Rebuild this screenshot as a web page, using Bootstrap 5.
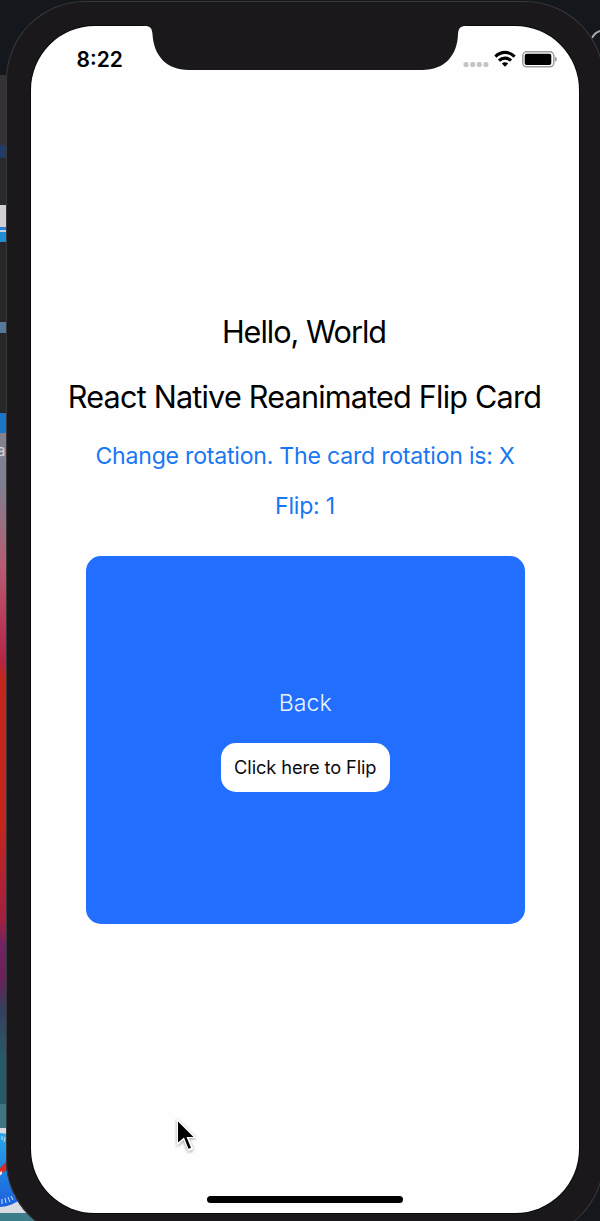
<!DOCTYPE html>
<html lang="en">
<head>
<meta charset="utf-8">
<meta name="viewport" content="width=device-width, initial-scale=1">
<title>Flip Card</title>
<link href="https://cdn.jsdelivr.net/npm/bootstrap@5.3.0/dist/css/bootstrap.min.css" rel="stylesheet">
<style>
  body { width: 600px; height: 1221px; background: #14171c; font-family: Inter, "Liberation Sans", sans-serif; color: #000; }
  .desktop-art { left: 0; top: 0; }
  .phone { width: 598px; height: 1238px; margin: 1px 0 0 6px; padding: 25px; border-radius: 79px; background: #1a181b; box-shadow: inset 0 0 0 1px #38383b; }
  .phone-screen { width: 548px; height: 1187px; border-radius: 64px; background: #fffeff; box-shadow: 0 0 0 1px #08080a; }
  .notch { left: 112px; top: -1px; }
  .status { height: 67px; padding: 0 23px 0 45.5px; }
  .clock { font-size: 21px; font-weight: 600; line-height: 26px; }
  .info { padding-top: 219px; }
  .heading-line { font-size: 30.6px; line-height: 40px; margin-bottom: 25px; white-space: nowrap; letter-spacing: -.8px; }
  .heading-line.greeting { letter-spacing: -1px; margin-left: -2px; }
  .heading-line.subject { margin-bottom: 23.5px; margin-left: -1px; }
  .link-btn { font-size: 23.1px; line-height: 30px; color: #1877f2; white-space: nowrap; letter-spacing: -.23px; }
  .flip-card { width: 438.5px; height: 368.5px; margin: 35px 0 0 55px; padding-top: 132.5px; border-radius: 15px; background: #226eff; }
  .back-label { font-size: 23.1px; line-height: 30px; color: #e9f4ff; font-weight: 300; }
  .flip-btn, .flip-btn:hover { width: 169px; height: 49px; margin-top: 25px; border-radius: 15px; background: #fffeff; color: #0b0b0d; font-size: 18.3px; line-height: 49px; letter-spacing: -.12px; white-space: nowrap; }
  .home-bar { width: 196px; height: 6.5px; background: #000; margin: 0 0 10.5px 176px; }
  .pointer { left: 170px; top: 1112px; filter: drop-shadow(0 1px 1.5px rgba(0,0,0,.4)); }
</style>
</head>
<body class="position-relative overflow-hidden m-0">
<svg class="desktop-art position-absolute" width="600" height="1221" viewBox="0 0 600 1221" aria-hidden="true">
  <defs>
    <linearGradient id="wall" gradientUnits="userSpaceOnUse" x1="0" y1="433" x2="0" y2="1221">
      <stop offset="0" stop-color="#85828f"/><stop offset=".06" stop-color="#7c8091"/>
      <stop offset=".17" stop-color="#b85b72"/><stop offset=".25" stop-color="#ba3557"/>
      <stop offset=".29" stop-color="#b42543"/><stop offset=".31" stop-color="#c2261b"/>
      <stop offset=".5" stop-color="#c3251e"/><stop offset=".62" stop-color="#a11f42"/>
      <stop offset=".65" stop-color="#6f2464"/><stop offset=".69" stop-color="#6c2059"/>
      <stop offset=".73" stop-color="#363e5e"/><stop offset=".79" stop-color="#28596a"/>
      <stop offset="1" stop-color="#28596a"/>
    </linearGradient>
    <linearGradient id="dial" x1="0" y1="0" x2="0" y2="1">
      <stop offset="0" stop-color="#26a8ea"/><stop offset="1" stop-color="#1d5fdc"/>
    </linearGradient>
  </defs>
  <rect y="75" width="8" height="70" fill="#343235"/>
  <rect y="145" width="8" height="13" fill="#203c66"/>
  <rect y="158" width="8" height="47" fill="#29292b"/>
  <rect y="205" width="8" height="22" fill="#d2d0d3"/>
  <rect y="227" width="8" height="3" fill="#2880d8"/>
  <rect y="230" width="8" height="2" fill="#c4d4e4"/>
  <rect y="232" width="8" height="10" fill="#218dd4"/>
  <rect y="242" width="8" height="80" fill="#272728"/>
  <rect y="322" width="8" height="11" fill="#56789a"/>
  <rect y="333" width="8" height="80" fill="#272728"/>
  <rect y="413" width="8" height="20" fill="#1c76c8"/>
  <rect y="433" width="60" height="788" fill="url(#wall)"/>
  <text x="-3" y="456" font-size="15" font-family="Inter, sans-serif" fill="#d8d5da">a</text>
  <rect y="1104" width="60" height="24" fill="#3f7684"/>
  <rect y="1128" width="60" height="85" fill="#d9dce1"/>
  <circle cx="-2" cy="1170" r="37" fill="url(#dial)"/>
  <path d="M-2 1170 7 1161V1170L-2 1175Z" fill="#d62d29"/>
  <path d="M-2 1173 2 1171V1174L-2 1177Z" fill="#f1e8e8"/>
  <path d="M2 1136v4M5 1137l-1 5M2 1199v5M5 1198l1 5M8 1197l2 5M11 1196l2 4M14 1194l2 4" stroke="#c5e4fb" stroke-width="1"/>
  <rect y="1213" width="60" height="8" fill="#3d7e8b"/>
  <path d="M592 38 C594 34 597 32 600 31" fill="none" stroke="#aaa9ac" stroke-width="2"/>
</svg>

<main class="phone position-relative">
  <div class="phone-screen position-relative d-flex flex-column">
    <svg class="notch position-absolute" width="326" height="46" viewBox="143 25 326 46" aria-hidden="true">
      <path d="M143 25V26H145C150 26 152 28 152.5 34C153.5 55 166 70 189 70H422C445 70 457.5 55 458 34C458.5 28 460.5 26 466 26H468V25Z" fill="#1a181b"/>
    </svg>
    <header class="status d-flex justify-content-between align-items-center">
      <span class="clock">8:22</span>
      <svg width="94" height="24" viewBox="462 48 94 24" overflow="visible" aria-label="Signal, Wi-Fi, battery">
        <g fill="#c5c5c7"><rect x="463.5" y="62" width="5" height="5" rx="1.8"/><rect x="470.2" y="62" width="5" height="5" rx="1.8"/><rect x="476.8" y="62" width="5" height="5" rx="1.8"/><rect x="483.4" y="62" width="5" height="5" rx="1.8"/></g>
        <g fill="none" stroke="#000" stroke-width="3.1"><path d="M495.4 56.6C501 51 509 51 514.6 56.6"/><path d="M499 60.7C502.5 57.2 507.5 57.2 511 60.7"/></g>
        <path d="M501.8 63.4C503.6 61.8 506.4 61.8 508.2 63.4L505 66.7Z"/>
        <rect x="522.8" y="51.8" width="31" height="15" rx="4" fill="none" stroke="#9b9b9d" stroke-width="1.5"/>
        <rect x="524.7" y="53.7" width="26.6" height="11.3" rx="2"/>
        <path d="M555.2 56.8C557.2 57.4 557.2 61.2 555.2 61.8Z" fill="#89898b"/>
      </svg>
    </header>

    <section class="info d-flex flex-column align-items-center">
      <div class="heading-line greeting">Hello, World</div>
      <div class="heading-line subject">React Native Reanimated Flip Card</div>
      <div class="link-btn">Change rotation. The card rotation is: X</div>
      <div class="link-btn mt-3 pt-1">Flip: 1</div>
    </section>

    <section class="flip-card d-flex flex-column align-items-center">
      <div class="back-label">Back</div>
      <button class="flip-btn btn border-0 p-0">Click here to Flip</button>
    </section>

    <div class="home-bar rounded-pill mt-auto"></div>
  </div>
</main>

<svg class="pointer position-absolute" width="32" height="46" viewBox="170 1112 32 46" aria-hidden="true">
  <path d="M176.8 1118V1146L183.5 1140 188.5 1151.5 193.5 1149.2 188.8 1138H196.5Z" fill="#fff"/>
  <path d="M178 1121.5V1142.5L184 1137.5 188.5 1148.8 191 1147.8 186.5 1137H193.5Z" fill="#000"/>
</svg>
<script src="https://cdn.jsdelivr.net/npm/bootstrap@5.3.0/dist/js/bootstrap.bundle.min.js"></script>
</body>
</html>
